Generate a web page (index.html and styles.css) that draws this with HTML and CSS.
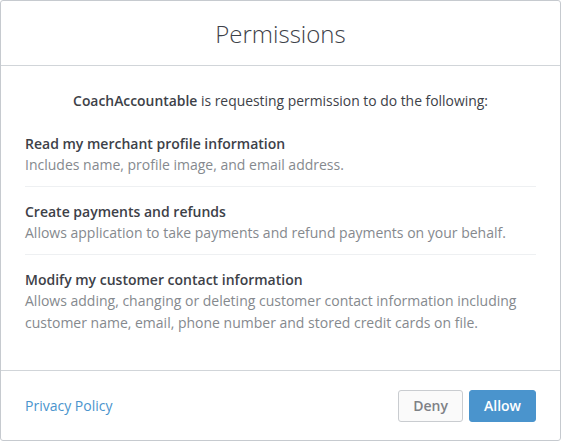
FILE: index.html
```html
<!DOCTYPE html>
<html>
<head>
<meta charset="utf-8">
<link rel="stylesheet" href="styles.css">
</head>
<body>
<div class="dialog">
  <div class="header"><h1>Permissions</h1></div>
  <div class="body">
    <p class="intro"><strong>CoachAccountable</strong> is requesting permission to do the following:</p>
    <ul class="perms">
      <li>
        <div class="perm-title">Read my merchant profile information</div>
        <div class="perm-desc">Includes name, profile image, and email address.</div>
      </li>
      <li>
        <div class="perm-title">Create payments and refunds</div>
        <div class="perm-desc">Allows application to take payments and refund payments on your behalf.</div>
      </li>
      <li>
        <div class="perm-title">Modify my customer contact information</div>
        <div class="perm-desc">Allows adding, changing or deleting customer contact information including customer name, email, phone number and stored credit cards on file.</div>
      </li>
    </ul>
  </div>
  <div class="footer">
    <a class="link" href="#">Privacy Policy</a>
    <div class="actions">
      <button class="btn btn-deny">Deny</button>
      <button class="btn btn-allow">Allow</button>
    </div>
  </div>
</div>
</body>
</html>
```
FILE: styles.css
```css
* { box-sizing: border-box; }
html, body { margin: 0; padding: 0; background: #fff; }
body {
  font-family: "Open Sans", "Liberation Sans", sans-serif;
  color: #3d4148;
  font-size: 14px;
}
.dialog {
  width: 561px;
  height: 441px;
  border: 1px solid #c6cacf;
  border-radius: 3px;
  display: flex;
  flex-direction: column;
}
.header {
  height: 65px;
  border-bottom: 1px solid #d1d5d9;
  display: flex;
  align-items: center;
  justify-content: center;
}
.header h1 {
  margin: 0;
  font-size: 24px;
  font-weight: 300;
  color: #3d4148;
}
.body {
  flex: 1;
  padding: 24px 24px 0;
}
.intro {
  margin: 0 0 22px;
  text-align: center;
  line-height: 22px;
  font-size: 13.9px;
}
.intro strong { font-weight: 600; }
.perms { list-style: none; margin: 0; padding: 0; }
.perms li {
  padding: 15px 0 10px;
  border-bottom: 1px solid #eef0f2;
}
.perms li:first-child { padding-top: 0; }
.perms li:last-child { border-bottom: none; }
.perm-title { font-weight: 600; line-height: 20px; }
.perm-desc { color: #85898e; line-height: 22px; }
.footer {
  height: 70px;
  border-top: 1px solid #d1d5d9;
  padding: 0 24px;
  display: flex;
  align-items: center;
  justify-content: space-between;
}
.link { color: #4a94cd; text-decoration: none; }
.actions { display: flex; gap: 6px; }
.btn {
  font-family: inherit;
  font-size: 14px;
  font-weight: 600;
  height: 32px;
  border-radius: 3px;
  padding: 0 14px;
}
.btn-deny { background: #fafafa; color: #7e8186; border: 1px solid #c9ccd0; }
.btn-allow { background: #4a94cd; color: #fff; border: 1px solid #4a94cd; padding: 0 14px; }
```
